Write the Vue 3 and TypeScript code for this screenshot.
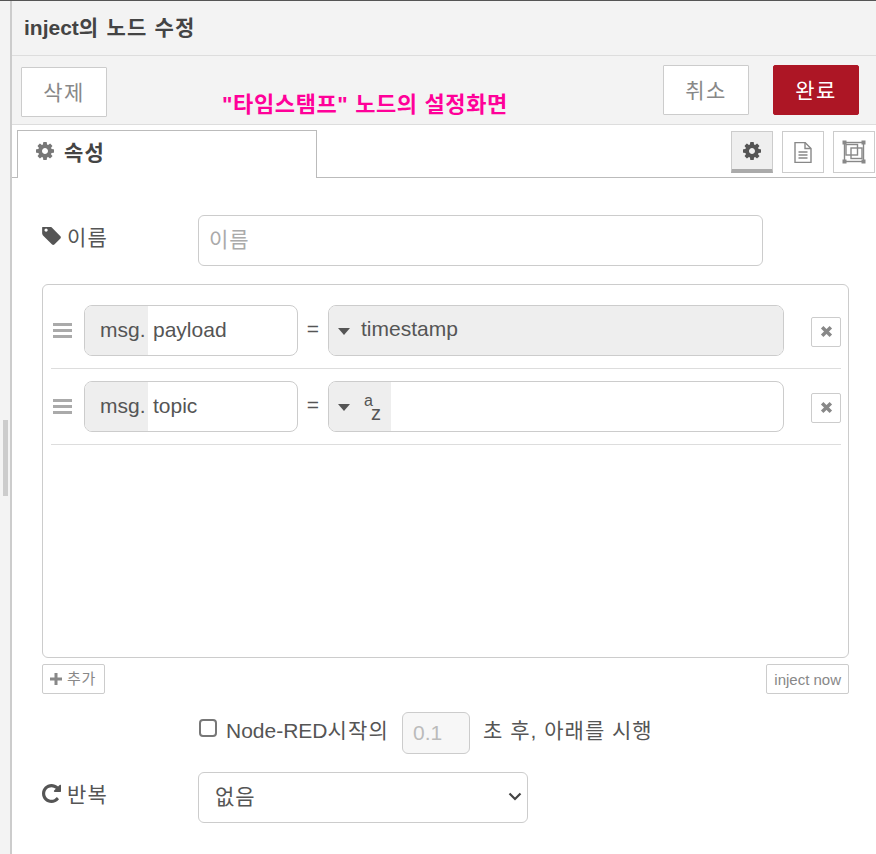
<script setup lang="ts">
interface Row { field: string; type: string; value: string; az: boolean }
const rows: Row[] = [
  { field: 'payload', type: 'timestamp', value: '', az: false },
  { field: 'topic', type: '', value: '', az: true },
]
const cog = 'M1024 640q0-106-75-181t-181-75-181 75-75 181 75 181 181 75 181-75 75-181zm512-109v222q0 12-8 23t-20 13l-185 28q-19 54-39 91 35 50 107 138 10 12 10 25t-9 23q-27 37-99 108t-94 71q-12 0-26-9l-138-108q-44 23-91 38-16 136-29 186-7 28-36 28h-222q-14 0-24.5-8.5t-11.5-21.5l-28-184q-49-16-90-37l-141 107q-10 9-25 9-14 0-25-11-126-114-165-168-7-10-7-23 0-12 8-23 15-21 51-66.5t54-70.5q-27-50-41-99l-183-27q-13-2-21-12.5t-8-23.5v-222q0-12 8-23t19-13l186-28q14-46 39-92-40-57-107-138-10-12-10-24 0-10 9-23 26-36 98.5-107.5t94.5-71.5q13 0 26 10l138 107q44-23 91-38 16-136 29-186 7-28 36-28h222q14 0 24.5 8.5t11.5 21.5l28 184q49 16 90 37l142-107q9-9 24-9 13 0 25 10 129 119 165 170 7 8 7 22 0 12-8 23-15 21-51 66.5t-54 70.5q26 50 41 98l183 28q13 2 21 12.5t8 23.5z'
</script>

<template>
  <div class="page">
    <div class="gutter"><div class="thumb"></div></div>
    <main class="tray">
      <header class="title">inject<span class="ko">의 노드 수정</span></header>
      <div class="toolbar">
        <button class="btn del">삭제</button>
        <span class="note">"타임스탬프" 노드의 설정화면</span>
        <button class="btn cancel">취소</button>
        <button class="btn done">완료</button>
      </div>
      <div class="tabs">
        <div class="tab">
          <svg class="tab-cog" viewBox="0 -128 1536 1536"><path :d="cog" /></svg>
          <span class="ko">속성</span>
        </div>
        <div class="tab-tools">
          <button class="tool active">
            <svg class="tool-cog" viewBox="0 -128 1536 1536"><path :d="cog" /></svg>
          </button>
          <button class="tool">
            <svg class="tool-svg" viewBox="1 0.500 18 21" fill="none" stroke="#888" stroke-width="1.400">
              <path d="M2 1h10l6 6v14H2z" />
              <path d="M12 1v6h6" />
              <path d="M5.500 10.500h9M5.500 13.500h9M5.500 16.500h9" />
            </svg>
          </button>
          <button class="tool">
            <svg class="tool-svg frame" viewBox="0 0 24 24" fill="none" stroke="#888" stroke-width="1.400">
              <rect x="2.500" y="2.500" width="19" height="19" />
              <rect x="4" y="4.500" width="11.500" height="10.500" />
              <rect x="9" y="8" width="11" height="10.500" />
              <g fill="#888" stroke="none">
                <rect x="0.500" y="0.500" width="4" height="4" />
                <rect x="19.500" y="0.500" width="4" height="4" />
                <rect x="0.500" y="19.500" width="4" height="4" />
                <rect x="19.500" y="19.500" width="4" height="4" />
              </g>
            </svg>
          </button>
        </div>
      </div>

      <section class="body">
        <div class="name-row">
          <label class="label">
            <svg class="tag" viewBox="0 64 1515 1536"><path d="M448 320q0-53-37.500-90.500t-90.500-37.500-90.500 37.500-37.500 90.500 37.500 90.500 90.500 37.500 90.500-37.500 37.500-90.500zm1067 576q0 53-37 90l-491 492q-39 37-91 37-53 0-90-37l-715-716q-38-37-64.500-101t-26.500-117v-416q0-52 38-90t90-38h416q53 0 117 26.500t102 64.500l715 714q37 39 37 91z" /></svg>
            <span class="ko">이름</span>
          </label>
          <input class="name-input" placeholder="이름" />
        </div>

        <div class="list">
          <div v-for="r in rows" :key="r.field" class="row">
            <div class="handle"><i></i><i></i><i></i></div>
            <div class="group field">
              <span class="prefix">msg.</span>
              <span class="field-val">{{ r.field }}</span>
            </div>
            <span class="eq">=</span>
            <div class="group typed" :class="{ full: !r.az }">
              <span class="type-btn">
                <i class="caret"></i>
                <span v-if="r.az" class="az"><span>a</span><span>z</span></span>
                <span v-else class="type-name">{{ r.type }}</span>
              </span>
            </div>
            <button class="remove">
              <svg viewBox="0 0 12 12" stroke="#888" stroke-width="3.200"><path d="M2 2l8 8M10 2l-8 8" /></svg>
            </button>
          </div>
        </div>

        <div class="list-actions">
          <button class="small add">
            <svg viewBox="0 0 12 12" fill="#888"><path d="M4.500 0h3v4.500H12v3H7.500V12h-3V7.500H0v-3h4.500z" /></svg>
            <span class="add-text">추가</span>
          </button>
          <button class="small">inject now</button>
        </div>

        <div class="once">
          <input class="check" type="checkbox" />
          <span class="once-a">Node-RED<span class="ko">시작의</span></span>
          <input class="delay" disabled placeholder="0.1" />
          <span class="once-b">초 후, 아래를 시행</span>
        </div>

        <div class="repeat">
          <label class="label">
            <svg class="tag" viewBox="0 128 1536 1536"><path d="M1536 256v448q0 26-19 45t-45 19h-448q-42 0-59-40-17-39 14-69l138-138q-148-137-349-137-104 0-198.500 40.500t-163.500 109.500-109.500 163.500-40.500 198.500 40.500 198.500 109.500 163.500 163.500 109.500 198.500 40.500q119 0 225-52t179-147q7-10 23-12 15 0 25 9l137 138q9 8 9.500 20.500t-7.500 22.500q-109 132-264 204.500t-327 72.500q-156 0-298-61t-245-164-164-245-61-298 61-298 164-245 245-164 298-61q147 0 284.500 55.500t244.500 156.500l130-129q29-31 70-14 39 17 39 59z" /></svg>
            <span class="ko">반복</span>
          </label>
          <div class="select-wrap">
            <select class="select">
              <option>없음</option>
            </select>
            <svg class="chev" viewBox="0 0 14 9" fill="none" stroke="#444" stroke-width="2.200"><path d="M1.500 1.500L7 7l5.500-5.500" /></svg>
          </div>
        </div>
      </section>
    </main>
  </div>
</template>

<style>
html, body { margin: 0; background: #fff; }
</style>

<style scoped>
.page {
  width: 876px;
  height: 854px;
  display: flex;
  overflow: hidden;
  box-sizing: border-box;
  border-top: 1px solid #555;
  color: #555;
  font-family: "Liberation Sans", "Noto Sans CJK KR", sans-serif;
  font-size: 21px;
}
.ko { letter-spacing: 1.2px; }
.gutter {
  width: 10px;
  flex: none;
  background: #f3f3f3;
  border-right: 2px solid #ccc;
}
.thumb {
  width: 5px;
  height: 76px;
  margin: 419px 0 0 3px;
  background: #ccc;
}
.tray {
  flex: 1;
  min-width: 0;
  display: flex;
  flex-direction: column;
}
.title {
  height: 55px;
  box-sizing: border-box;
  padding: 13px 0 0 12px;
  background: #f3f3f3;
  border-bottom: 1px solid #ddd;
  font-weight: 700;
  font-size: 21px;
  line-height: 28px;
  color: #444;
}
.toolbar {
  height: 69px;
  box-sizing: border-box;
  display: flex;
  background: #f3f3f3;
  border-bottom: 1px solid #ddd;
  padding: 9px 17px 0 9px;
}
.btn {
  width: 86px;
  height: 50px;
  box-sizing: border-box;
  padding: 0 0 2px;
  border: 1px solid #ccc;
  border-radius: 1px;
  background: #fff;
  color: #888;
  font: inherit;
  letter-spacing: 1.500px;
}
.del { margin-top: 2px; }
.note {
  margin: 27px 0 0 115px;
  font-size: 22px;
  line-height: 26px;
  font-weight: 700;
  letter-spacing: 0.620px;
  color: #ff0099;
  white-space: nowrap;
}
.cancel { margin-left: auto; }
.done {
  margin-left: 24px;
  background: #ad1625;
  border-color: #ad1625;
  color: #fff;
  border-radius: 2px;
}
.tabs {
  height: 53px;
  box-sizing: border-box;
  display: flex;
  justify-content: space-between;
  padding: 5px 1px 0 5px;
  border-bottom: 1px solid #bbb;
}
.tab {
  width: 300px;
  height: 48px;
  box-sizing: border-box;
  display: flex;
  align-items: center;
  gap: 10px;
  padding: 0 0 8px 18px;
  background: #fff;
  border: 1px solid #bbb;
  border-bottom: none;
  font-weight: 700;
  color: #444;
}
.tab-cog { width: 18px; height: 18px; fill: #777; margin-top: 1px; }
.tab-tools { display: flex; gap: 9px; }
.tool {
  width: 42px;
  height: 42px;
  box-sizing: border-box;
  margin-top: 1px;
  padding: 0;
  display: flex;
  align-items: center;
  justify-content: center;
  background: #fff;
  border: 1px solid #ccc;
}
.tool.active {
  background: #efefef;
  border-bottom: 4px solid #aaa;
  padding-top: 1px;
}
.tool-cog { width: 18px; height: 18px; fill: #555; }
.tool-svg { width: 18px; height: 21px; }
.tool-svg.frame { width: 24px; height: 24px; }
.body {
  flex: 1;
  padding: 37px 27px 0 30px;
}
.name-row {
  display: flex;
  align-items: center;
}
.label {
  width: 156px;
  flex: none;
  display: flex;
  align-items: center;
  gap: 6px;
  padding-bottom: 9px;
  box-sizing: border-box;
}
.tag { width: 19px; height: 19px; fill: #555; margin-top: 1px; }
.name-input {
  width: 565px;
  height: 51px;
  box-sizing: border-box;
  padding: 0 10px 2px;
  border: 1px solid #ccc;
  border-radius: 6px;
  font: inherit;
  color: #555;
  outline: none;
}
.name-input::placeholder { color: #aaa; letter-spacing: 1px; }
.list {
  height: 374px;
  box-sizing: border-box;
  margin-top: 18px;
  padding: 8px 7px 0 8px;
  border: 1px solid #ccc;
  border-radius: 6px;
}
.row {
  height: 76px;
  box-sizing: border-box;
  display: flex;
  align-items: center;
  border-bottom: 1px solid #ddd;
}
.handle {
  width: 19px;
  margin-left: 2px;
  display: flex;
  flex-direction: column;
  gap: 3px;
}
.handle i {
  display: block;
  height: 3px;
  background: #aaa;
}
.group {
  height: 51px;
  box-sizing: border-box;
  display: flex;
  align-items: stretch;
  border: 1px solid #ccc;
  border-radius: 8px;
  overflow: hidden;
  background: #fff;
}
.field { width: 214px; margin-left: 12px; }
.prefix {
  width: 63px;
  flex: none;
  box-sizing: border-box;
  padding: 0 0 2px 15px;
  display: flex;
  align-items: center;
  background: #eee;
}
.field-val {
  display: flex;
  align-items: center;
  padding: 0 0 2px 5px;
}
.eq {
  width: 30px;
  text-align: center;
  padding-bottom: 3px;
}
.typed { width: 456px; }
.type-btn {
  display: flex;
  align-items: center;
  background: #eee;
  padding: 0 9px 0 9px;
  gap: 10px;
}
.typed.full .type-btn { flex: 1; padding-right: 0; gap: 11px; }
.caret {
  width: 0;
  height: 0;
  border-left: 6.500px solid transparent;
  border-right: 6.500px solid transparent;
  border-top: 7px solid #555;
  margin-top: 2px;
}
.type-name { padding-bottom: 3px; }
.az {
  width: 18px;
  margin-left: 4px;
  display: flex;
  flex-direction: column;
  line-height: 13px;
  font-size: 16px;
}
.az span:last-child {
  font-size: 20px;
  padding-left: 7px;
}
.remove {
  width: 30px;
  height: 30px;
  box-sizing: border-box;
  margin: 2px 0 0 27px;
  padding: 0;
  display: flex;
  align-items: center;
  justify-content: center;
  background: #fff;
  border: 1px solid #ccc;
  border-radius: 2px;
}
.remove svg { width: 13px; height: 13px; }
.list-actions {
  display: flex;
  justify-content: space-between;
  margin-top: 6px;
}
.small {
  height: 30px;
  box-sizing: border-box;
  padding: 0 7px;
  display: flex;
  align-items: center;
  gap: 5px;
  background: #fff;
  border: 1px solid #ccc;
  border-radius: 2px;
  color: #888;
  font: inherit;
  font-size: 15px;
}
.add { padding-right: 8px; }
.add svg { width: 12px; height: 12px; }
.add-text { letter-spacing: 0.800px; padding-bottom: 4px; }
.once {
  display: flex;
  align-items: center;
  margin: 18px 0 0 156px;
}
.check {
  appearance: none;
  width: 18px;
  height: 18px;
  box-sizing: border-box;
  margin: 0 0 10px 1px;
  border: 2px solid #777;
  border-radius: 4px;
  background: #fff;
}
.once-a { margin-left: 9px; padding-bottom: 9px; }
.delay {
  width: 68px;
  height: 42px;
  box-sizing: border-box;
  margin-left: 13px;
  padding: 0 10px;
  border: 1px solid #ccc;
  border-radius: 6px;
  background: #f7f7f7;
  font: inherit;
}
.delay::placeholder { color: #bbb; }
.once-b {
  margin-left: 13px;
  padding-bottom: 9px;
  letter-spacing: 1px;
}
.repeat {
  display: flex;
  align-items: center;
  margin-top: 18px;
}
.select-wrap {
  position: relative;
  width: 330px;
  height: 51px;
}
.select {
  appearance: none;
  width: 100%;
  height: 100%;
  box-sizing: border-box;
  padding: 0 16px 2px;
  border: 1px solid #ccc;
  border-radius: 6px;
  background: #fff;
  color: #555;
  font: inherit;
  letter-spacing: 1px;
  outline: none;
}
.chev {
  position: absolute;
  right: 6px;
  top: 20px;
  width: 14px;
  height: 9px;
  pointer-events: none;
}
</style>
